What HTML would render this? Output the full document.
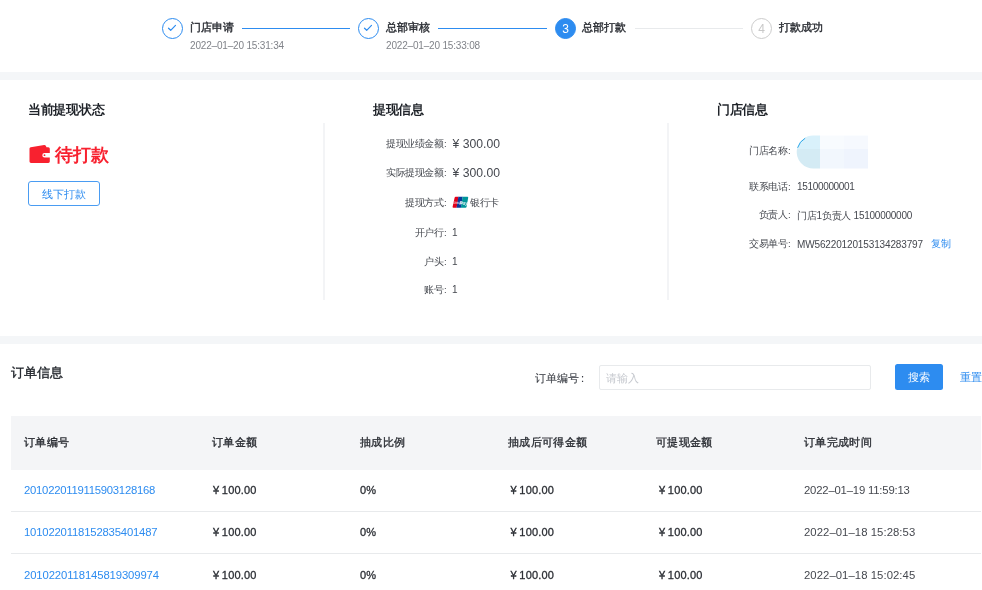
<!DOCTYPE html>
<html><head><meta charset="utf-8">
<style>
html,body{margin:0;padding:0;background:#fff;}
body{width:982px;height:590px;overflow:hidden;position:relative;font-family:"Liberation Sans",sans-serif;color:#45484f;}
#root{position:absolute;left:0;top:0;width:982px;height:590px;overflow:hidden;background:#fff;will-change:transform;}
.a{position:absolute;white-space:nowrap;line-height:1;}
.band{position:absolute;left:0;width:982px;height:8px;background:#f4f6f8;}
.circ{position:absolute;width:19px;height:19px;border:1px solid #2d8cf0;border-radius:50%;box-sizing:content-box;}
.st{font-size:11px;color:#2b2e34;-webkit-text-stroke:0.4px #2b2e34;}
.sd{font-size:10px;color:#808389;letter-spacing:-0.18px;}
.ln{position:absolute;height:1px;background:#2d8cf0;}
.ct{font-size:13px;font-weight:bold;color:#1f2329;transform:scale(0.98);transform-origin:0 0;}
.lb{font-size:10px;color:#45484f;}
.lc{font-size:10px;color:#45484f;transform:scale(0.95);transform-origin:100% 50%;}
.lc i{font-style:normal;margin-left:0.8px;}
.lcl{transform-origin:0 50%;}
.vd{position:absolute;width:2px;background:#f3f4f6;}
.th{font-size:11px;color:#2b2e34;-webkit-text-stroke:0.35px #2b2e34;letter-spacing:0.35px;}
.td{font-size:11px;color:#2b2e34;-webkit-text-stroke:0.3px #2b2e34;letter-spacing:0.2px;}
.td b{font-weight:normal;margin-right:2.5px;}
.tl{font-size:11.3px;color:#2d8cf0;letter-spacing:-0.25px;}
.tt{font-size:11.3px;color:#45484f;letter-spacing:-0.18px;}
.sep{position:absolute;left:11px;width:970px;height:1px;background:#e8eaec;}
</style></head><body><div id="root">
<!-- steps -->
<div class="circ" style="left:162px;top:18px;"></div>
<svg class="a" style="left:162px;top:18px" width="21" height="21" viewBox="0 0 21 21"><path d="M6.5 10.2 L8.7 12.3 L13.5 7.4" fill="none" stroke="#2d8cf0" stroke-width="1.2" stroke-linecap="round" stroke-linejoin="round"/></svg>
<div class="a st" style="left:190px;top:21.5px;">门店申请</div>
<div class="a sd" style="left:190px;top:41px;">2022–01–20 15:31:34</div>
<div class="ln" style="left:242px;top:28px;width:108px;"></div>

<div class="circ" style="left:358px;top:18px;"></div>
<svg class="a" style="left:358px;top:18px" width="21" height="21" viewBox="0 0 21 21"><path d="M6.5 10.2 L8.7 12.3 L13.5 7.4" fill="none" stroke="#2d8cf0" stroke-width="1.2" stroke-linecap="round" stroke-linejoin="round"/></svg>
<div class="a st" style="left:385.5px;top:21.5px;">总部审核</div>
<div class="a sd" style="left:386px;top:41px;">2022–01–20 15:33:08</div>
<div class="ln" style="left:438px;top:28px;width:109px;"></div>

<div class="circ" style="left:555px;top:18px;background:#2d8cf0;"></div>
<div class="a" style="left:555px;top:22.8px;width:21px;text-align:center;font-size:12px;color:#fff;">3</div>
<div class="a st" style="left:582px;top:21.5px;">总部打款</div>
<div class="ln" style="left:635px;top:28px;width:108px;background:#e8eaec;"></div>

<div class="circ" style="left:751px;top:18px;border-color:#ccc;"></div>
<div class="a" style="left:751px;top:22.8px;width:21px;text-align:center;font-size:12px;color:#c8c8c8;">4</div>
<div class="a st" style="left:778.5px;top:21.5px;">打款成功</div>

<div class="band" style="top:72px;"></div>

<!-- section 1 -->
<div class="a ct" style="left:27.5px;top:102.8px;">当前提现状态</div>
<div class="a ct" style="left:372.5px;top:102.8px;">提现信息</div>
<div class="a ct" style="left:716.5px;top:102.8px;">门店信息</div>

<svg class="a" style="left:26px;top:141px" width="28" height="26" viewBox="0 0 28 26">
<path d="M3.5 7.6 Q3.5 6.4 4.7 6.3 L18.2 3.9 Q19.2 3.8 19.8 4.8 L20.5 6.2 L22.3 6.2 Q23.8 6.2 23.8 7.7 L23.8 11.9 L18.6 11.9 Q16.3 11.9 16.3 14.2 Q16.3 16.5 18.6 16.5 L23.8 16.5 L23.8 20.6 Q23.8 22 22.3 22 L5 22 Q3.5 22 3.5 20.6 Z" fill="#f8212f"/>
<circle cx="18.5" cy="14.2" r="0.9" fill="#f8212f"/>
</svg>
<div class="a" style="left:55px;top:146px;font-size:18px;color:#f8212f;font-weight:bold;">待打款</div>
<div class="a" style="left:27.5px;top:181px;width:70px;height:23px;border:1px solid #4a9cf2;border-radius:3px;"></div>
<div class="a" style="left:42px;top:188.5px;font-size:11px;color:#2d8cf0;">线下打款</div>

<div class="vd" style="left:323px;top:123px;height:177px;"></div>
<div class="vd" style="left:667px;top:123px;height:177px;"></div>

<!-- col2 rows -->
<div class="a lc" style="right:535.5px;top:138.5px;">提现业绩金额<i>:</i></div>
<div class="a" style="left:452.5px;top:138px;font-size:12.2px;color:#45484f;">¥ 300.00</div>
<div class="a lc" style="right:535.5px;top:167.5px;">实际提现金额<i>:</i></div>
<div class="a" style="left:452.5px;top:166.5px;font-size:12.2px;color:#45484f;">¥ 300.00</div>
<div class="a lc" style="right:535.5px;top:197.5px;">提现方式<i>:</i></div>
<svg class="a" style="left:452px;top:196px" width="17" height="13" viewBox="0 0 17 13">
<path d="M3.8 0.8 L6.6 0.8 L4.6 11.7 L1.4 11.7 Q0.4 11.7 0.6 10.7 L2.6 1.8 Q2.8 0.8 3.8 0.8 Z" fill="#e2001a"/>
<path d="M6.4 0.8 L10.7 0.8 L8.9 11.7 L4.5 11.7 Z" fill="#0a3a9a"/>
<path d="M10.6 0.8 L15.5 0.8 Q16.4 0.8 16.2 1.8 L14.6 10.7 Q14.4 11.7 13.5 11.7 L8.8 11.7 Z" fill="#00959a"/>
<text x="2.2" y="7.6" font-family="Liberation Sans" font-size="3.6" font-style="italic" font-weight="bold" fill="#fff" opacity="0.75" transform="skewX(-8)">Union</text>
<text x="7.6" y="8.6" font-family="Liberation Sans" font-size="4.6" font-style="italic" font-weight="bold" fill="#fff" opacity="0.8">Pay</text>
</svg>
<div class="a lc lcl" style="left:470px;top:197.5px;">银行卡</div>
<div class="a lc" style="right:535.5px;top:227.5px;">开户行<i>:</i></div>
<div class="a lb" style="left:452px;top:227.5px;">1</div>
<div class="a lc" style="right:535.5px;top:257.4px;">户头<i>:</i></div>
<div class="a lb" style="left:452px;top:257.4px;">1</div>
<div class="a lc" style="right:535.5px;top:285.3px;">账号<i>:</i></div>
<div class="a lb" style="left:452px;top:285.3px;">1</div>

<!-- col3 rows -->
<div class="a lc" style="right:191px;top:146px;">门店名称<i>:</i></div>
<svg class="a" style="left:796px;top:135px" width="73" height="35" viewBox="0 0 73 35">
<rect x="24" y="0.6" width="24" height="13.4" fill="#f8fbfe"/>
<rect x="48" y="0.6" width="24" height="13.4" fill="#f6f9fe"/>
<rect x="24" y="14" width="24" height="19.5" fill="#f2f7fd"/>
<rect x="48" y="14" width="24" height="19.5" fill="#eff4fd"/>
<path d="M24 0.6 L18.5 0.6 A16.5 16.5 0 0 0 1 14 L24 14 Z" fill="#d9f1fb"/>
<path d="M1 14 A16.5 16.5 0 0 0 18.5 33.5 L24 33.5 L24 14 Z" fill="#d4ebf4"/>
<path d="M1.6 12.8 A16.5 16.5 0 0 1 9.2 3.2" fill="none" stroke="#1a9fe6" stroke-width="1" opacity="0.9"/>
</svg>
<div class="a lc" style="right:191px;top:181.5px;">联系电话<i>:</i></div>
<div class="a lb" style="left:797px;top:182.1px;letter-spacing:-0.33px;">15100000001</div>
<div class="a lc" style="right:191px;top:210px;">负责人<i>:</i></div>
<div class="a lb" style="left:797px;top:210.5px;letter-spacing:-0.25px;">门店1负责人 15100000000</div>
<div class="a lc" style="right:191px;top:239px;">交易单号<i>:</i></div>
<div class="a lb" style="left:797px;top:239.6px;letter-spacing:-0.14px;">MW56220120153134283797</div>
<div class="a lb" style="left:931px;top:239px;color:#2d8cf0;">复制</div>

<div class="band" style="top:336px;"></div>

<!-- section 2 -->
<div class="a" style="left:11px;top:366px;font-size:13px;color:#1f2329;-webkit-text-stroke:0.35px #1f2329;">订单信息</div>
<div class="a" style="right:398px;top:373px;font-size:11px;color:#3a3d44;-webkit-text-stroke:0.1px #3a3d44;">订单编号<span style="margin-left:1.5px">:</span></div>
<div class="a" style="left:599px;top:365px;width:270px;height:23px;border:1px solid #e8eaec;border-radius:2px;"></div>
<div class="a" style="left:605.5px;top:373px;font-size:11px;color:#c5c8ce;">请输入</div>
<div class="a" style="left:895px;top:364px;width:48px;height:25.5px;background:#2d8cf0;border-radius:2.5px;"></div>
<div class="a" style="left:908px;top:372px;font-size:11px;color:#fff;">搜索</div>
<div class="a" style="left:960px;top:372px;font-size:11px;color:#2d8cf0;">重置</div>

<div class="a" style="left:11px;top:416px;width:970px;height:54px;background:#f4f5f7;"></div>
<div class="a th" style="left:24px;top:436.5px;">订单编号</div>
<div class="a th" style="left:212px;top:436.5px;">订单金额</div>
<div class="a th" style="left:360px;top:436.5px;">抽成比例</div>
<div class="a th" style="left:508px;top:436.5px;">抽成后可得金额</div>
<div class="a th" style="left:656px;top:436.5px;">可提现金额</div>
<div class="a th" style="left:804px;top:436.5px;">订单完成时间</div>

<div class="a tl" style="left:24px;top:484.5px;">2010220119115903128168</div>
<div class="a td" style="left:213px;top:484.5px;"><b>¥</b>100.00</div>
<div class="a td" style="left:360px;top:484.5px;">0%</div>
<div class="a td" style="left:510.5px;top:484.5px;"><b>¥</b>100.00</div>
<div class="a td" style="left:659px;top:484.5px;"><b>¥</b>100.00</div>
<div class="a tt" style="left:804px;top:484.5px;">2022–01–19 11:59:13</div>
<div class="sep" style="top:511px;"></div>

<div class="a tl" style="left:24px;top:527px;letter-spacing:-0.18px;">1010220118152835401487</div>
<div class="a td" style="left:213px;top:527px;"><b>¥</b>100.00</div>
<div class="a td" style="left:360px;top:527px;">0%</div>
<div class="a td" style="left:510.5px;top:527px;"><b>¥</b>100.00</div>
<div class="a td" style="left:659px;top:527px;"><b>¥</b>100.00</div>
<div class="a tt" style="left:804px;top:527px;letter-spacing:0.07px;">2022–01–18 15:28:53</div>
<div class="sep" style="top:553px;"></div>

<div class="a tl" style="left:24px;top:569.5px;letter-spacing:-0.11px;">2010220118145819309974</div>
<div class="a td" style="left:213px;top:569.5px;"><b>¥</b>100.00</div>
<div class="a td" style="left:360px;top:569.5px;">0%</div>
<div class="a td" style="left:510.5px;top:569.5px;"><b>¥</b>100.00</div>
<div class="a td" style="left:659px;top:569.5px;"><b>¥</b>100.00</div>
<div class="a tt" style="left:804px;top:569.5px;letter-spacing:0.07px;">2022–01–18 15:02:45</div>
</div></body></html>
